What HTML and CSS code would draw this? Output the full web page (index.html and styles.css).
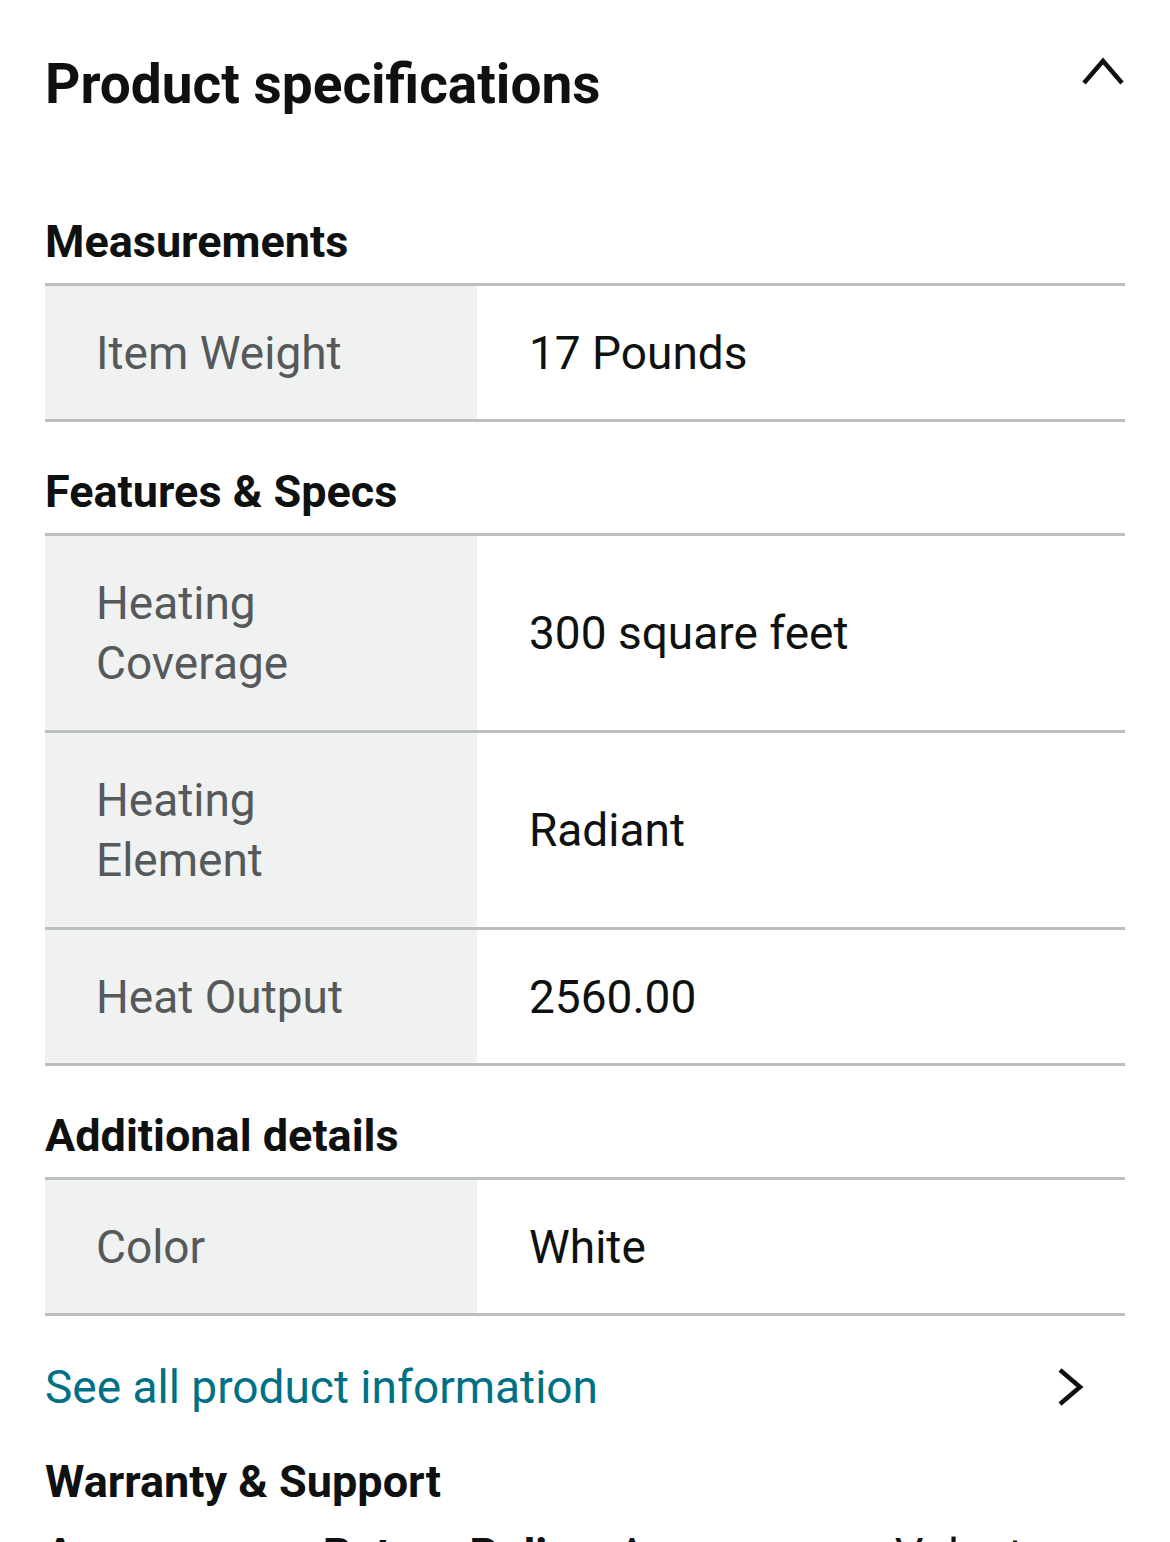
FILE: index.html
```
<!DOCTYPE html>
<html lang="en">
<head>
<meta charset="utf-8">
<title>Product specifications</title>
<link rel="stylesheet" href="styles.css">
</head>
<body>
<main class="page">
  <header class="title-row">
    <h2 class="title">Product specifications</h2>
    <svg class="chev-up" width="44" height="32" viewBox="0 0 44 32" aria-hidden="true">
      <polyline points="3,27 22,5 41,27" fill="none" stroke="#0f1111" stroke-width="4.5" stroke-linejoin="miter"/>
    </svg>
  </header>

  <section class="spec-section">
    <h3 class="section-title">Measurements</h3>
    <div class="spec-table">
      <div class="spec-row">
        <div class="spec-label">Item Weight</div>
        <div class="spec-value">17 Pounds</div>
      </div>
    </div>
  </section>

  <section class="spec-section">
    <h3 class="section-title">Features &amp; Specs</h3>
    <div class="spec-table">
      <div class="spec-row spec-row-tall">
        <div class="spec-label">Heating Coverage</div>
        <div class="spec-value">300 square feet</div>
      </div>
      <div class="spec-row spec-row-tall">
        <div class="spec-label">Heating Element</div>
        <div class="spec-value">Radiant</div>
      </div>
      <div class="spec-row">
        <div class="spec-label">Heat Output</div>
        <div class="spec-value">2560.00</div>
      </div>
    </div>
  </section>

  <section class="spec-section">
    <h3 class="section-title">Additional details</h3>
    <div class="spec-table">
      <div class="spec-row">
        <div class="spec-label">Color</div>
        <div class="spec-value">White</div>
      </div>
    </div>
  </section>

  <a class="see-all" href="#">
    <span>See all product information</span>
    <svg class="chev-right" width="30" height="40" viewBox="0 0 30 40" aria-hidden="true">
      <polyline points="5,3 25,20 5,37" fill="none" stroke="#0f1111" stroke-width="4.5" stroke-linejoin="miter"/>
    </svg>
  </a>

  <section class="warranty">
    <h3 class="section-title warranty-title">Warranty &amp; Support</h3>
    <p class="warranty-text"><strong>Amazon.com Return Policy:</strong> Amazon.com Voluntary 30-Day Return Guarantee: You can return many items you have purchased within 30 days following delivery of the item to you.</p>
  </section>
</main>
</body>
</html>
```
FILE: styles.css
```
html, body {
  margin: 0;
  padding: 0;
  background: #ffffff;
}

body {
  font-family: Roboto, "Noto Sans", Arial, sans-serif;
  color: #0f1111;
  overflow: hidden;
}

.page {
  padding: 54px 45px 0 45px;
}

.title-row {
  display: flex;
  justify-content: space-between;
  align-items: flex-start;
  margin-bottom: 98px;
}

.title {
  margin: 0;
  font-size: 55px;
  line-height: 60px;
  font-weight: 700;
  color: #0f1111;
}

.chev-up {
  display: block;
  margin-top: 2px;
}

.spec-section {
  margin: 0;
}

.section-title {
  margin: 40px 0 11px 0;
  font-size: 45px;
  line-height: 60px;
  font-weight: 700;
  color: #0f1111;
}

.spec-table {
  border-top: 3px solid #bcbfbf;
}

.spec-row {
  display: grid;
  grid-template-columns: 432px 1fr;
  border-bottom: 3px solid #bcbfbf;
}

.spec-label {
  background: #f0f2f2;
  color: #565959;
  font-size: 46px;
  line-height: 60px;
  padding: 37px 70px 36px 51px;
}

.spec-row-tall .spec-label {
  padding-bottom: 37px;
}

.spec-value {
  display: flex;
  align-items: center;
  color: #0f1111;
  font-size: 46px;
  line-height: 60px;
  padding: 0 20px 0 52px;
}

.see-all {
  display: flex;
  justify-content: space-between;
  align-items: center;
  margin-top: 41px;
  color: #007185;
  text-decoration: none;
  font-size: 46px;
  line-height: 60px;
}

.chev-right {
  display: block;
  margin-right: 40px;
}

.warranty-title {
  margin-top: 35px;
  margin-bottom: 13px;
}

.warranty-text {
  margin: 0;
  font-size: 45px;
  line-height: 60px;
  color: #0f1111;
}

.warranty-text strong {
  font-weight: 700;
}
```
